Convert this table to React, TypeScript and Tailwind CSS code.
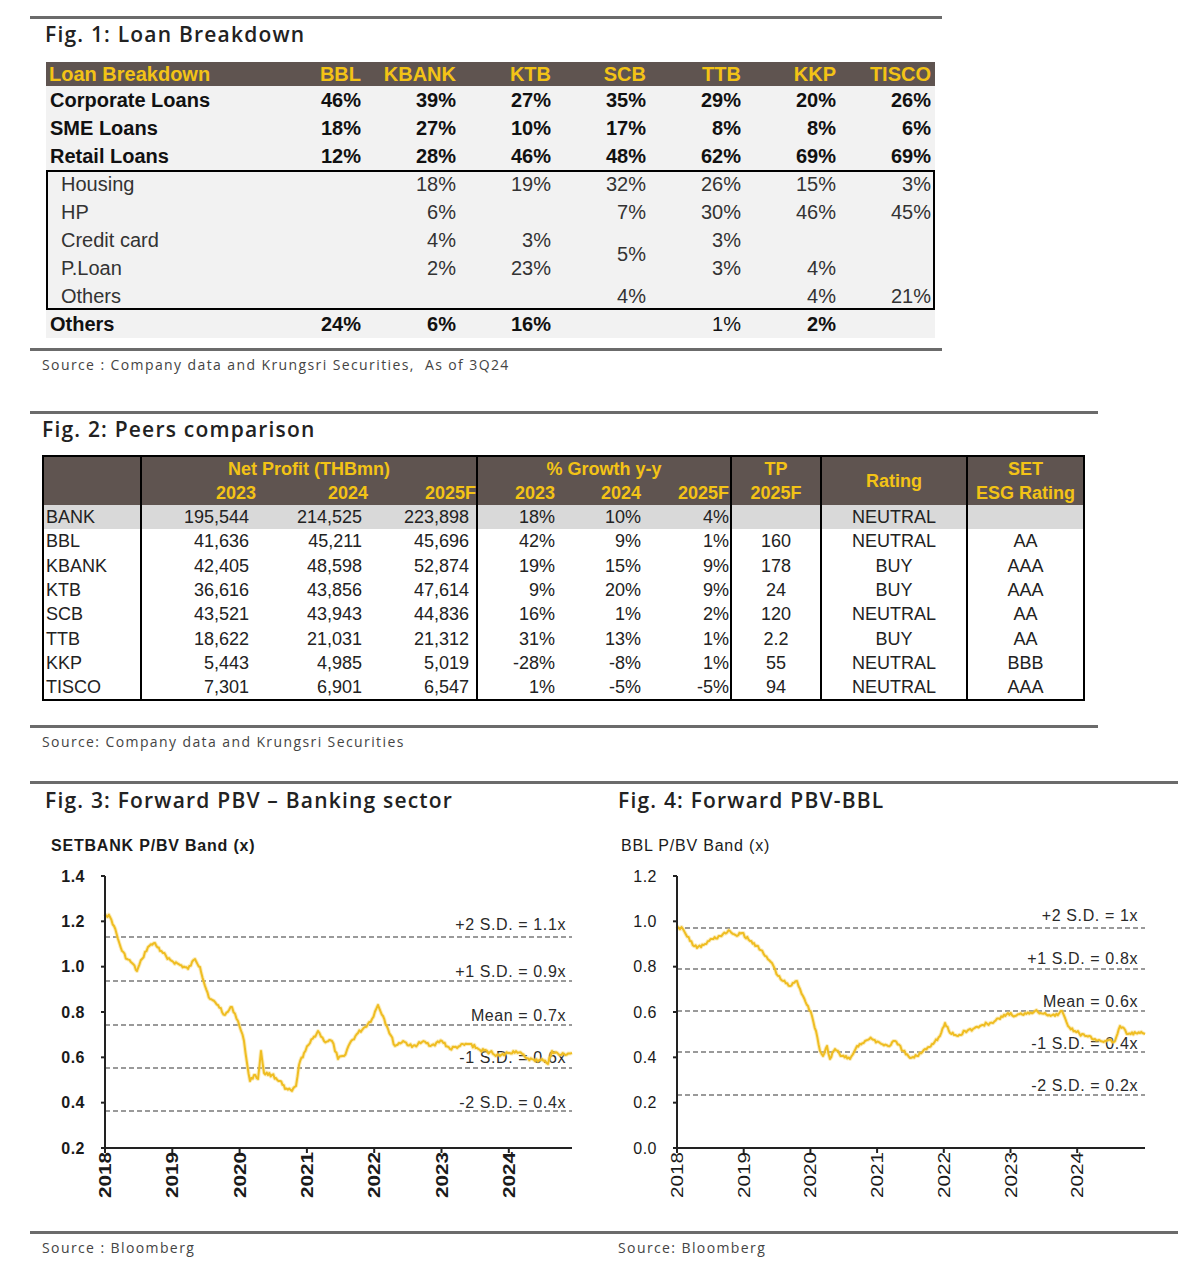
import React from "react";

const TITLE = "font-['Open_Sans',sans-serif] font-semibold text-[21px] leading-[26px] tracking-[1.2px] text-[#222]";
const SOURCE = "font-['Open_Sans',sans-serif] text-[14px] leading-[18px] tracking-[1.4px] text-[#444]";
const ARIAL = "font-['Liberation_Sans',Arial,sans-serif]";

const mainRows = [
  { label: "Corporate Loans", vals: ["46%", "39%", "27%", "35%", "29%", "20%", "26%"] },
  { label: "SME Loans", vals: ["18%", "27%", "10%", "17%", "8%", "8%", "6%"] },
  { label: "Retail Loans", vals: ["12%", "28%", "46%", "48%", "62%", "69%", "69%"] },
];

const banks = ["BBL", "KBANK", "KTB", "SCB", "TTB", "KKP", "TISCO"];

const peers = [
  ["BANK", "195,544", "214,525", "223,898", "18%", "10%", "4%", "", "NEUTRAL", ""],
  ["BBL", "41,636", "45,211", "45,696", "42%", "9%", "1%", "160", "NEUTRAL", "AA"],
  ["KBANK", "42,405", "48,598", "52,874", "19%", "15%", "9%", "178", "BUY", "AAA"],
  ["KTB", "36,616", "43,856", "47,614", "9%", "20%", "9%", "24", "BUY", "AAA"],
  ["SCB", "43,521", "43,943", "44,836", "16%", "1%", "2%", "120", "NEUTRAL", "AA"],
  ["TTB", "18,622", "21,031", "21,312", "31%", "13%", "1%", "2.2", "BUY", "AA"],
  ["KKP", "5,443", "4,985", "5,019", "-28%", "-8%", "1%", "55", "NEUTRAL", "BBB"],
  ["TISCO", "7,301", "6,901", "6,547", "1%", "-5%", "-5%", "94", "NEUTRAL", "AAA"],
];

// per column cell classes for the peers table body
const peerCell = [
  "pl-[2px] border-r-2 border-black",
  "justify-end pr-[9px]",
  "justify-end pr-[8px]",
  "justify-end pr-[7px] border-r-2 border-black",
  "justify-end pr-[7px]",
  "justify-end pr-[5px]",
  "justify-end pr-[1px] border-r-2 border-black",
  "justify-center border-r-2 border-black",
  "justify-center border-r-2 border-black",
  "justify-center",
];

function jag(pts: number[][], seed: number, amp = 1.8) {
  let s = seed;
  const rnd = () => {
    s = (s * 9301 + 49297) % 233280;
    return s / 233280;
  };
  let d = `M${pts[0][0]} ${pts[0][1]}`;
  for (let i = 1; i < pts.length; i++) {
    const [x0, y0] = pts[i - 1];
    const [x1, y1] = pts[i];
    const n = Math.max(1, Math.round((x1 - x0) / 1.4));
    for (let k = 1; k <= n; k++) {
      const t = k / n;
      const x = x0 + (x1 - x0) * t;
      const y = y0 + (y1 - y0) * t + (k === n ? 0 : (rnd() - 0.5) * amp * 2);
      d += ` L${x.toFixed(1)} ${y.toFixed(1)}`;
    }
  }
  return d;
}

const line1 = [
  [105, 913], [110, 916], [114, 925], [118, 938], [122, 950], [127, 958], [132, 962], [137, 970], [142, 958],
  [148, 946], [155, 942], [160, 950], [166, 955], [172, 960], [180, 964], [188, 968], [195, 958], [200, 966],
  [205, 985], [210, 998], [218, 1004], [225, 1014], [232, 1006], [238, 1020], [244, 1040], [247, 1062],
  [250, 1080], [254, 1074], [258, 1078], [261, 1050], [264, 1072], [272, 1074], [280, 1080], [285, 1088],
  [292, 1090], [296, 1085], [299, 1064], [304, 1052], [310, 1042], [318, 1030], [324, 1040], [332, 1040],
  [338, 1058], [344, 1055], [350, 1042], [358, 1032], [365, 1026], [372, 1018], [378, 1004], [383, 1015],
  [388, 1028], [395, 1045], [403, 1040], [412, 1046], [422, 1041], [432, 1044], [442, 1040], [450, 1048],
  [460, 1045], [470, 1043], [480, 1049], [490, 1051], [500, 1055], [508, 1052], [516, 1050], [525, 1056],
  [535, 1060], [542, 1058], [548, 1063], [552, 1050], [560, 1054], [572, 1052],
];

const line2 = [
  [677, 925], [683, 928], [690, 940], [697, 947], [705, 943], [712, 938], [720, 935], [730, 930], [737, 935],
  [742, 932], [750, 940], [758, 945], [765, 955], [772, 962], [778, 975], [783, 980], [790, 985], [797, 980],
  [803, 995], [808, 1005], [812, 1015], [816, 1030], [820, 1050], [823, 1055], [827, 1045], [830, 1058],
  [835, 1048], [842, 1055], [850, 1058], [857, 1045], [865, 1040], [872, 1038], [880, 1042], [888, 1045],
  [895, 1040], [903, 1050], [910, 1057], [917, 1055], [925, 1048], [932, 1043], [940, 1035], [945, 1022],
  [950, 1032], [958, 1035], [965, 1030], [973, 1028], [980, 1025], [990, 1022], [1000, 1018], [1008, 1012],
  [1015, 1015], [1025, 1012], [1035, 1010], [1045, 1012], [1055, 1015], [1062, 1010], [1068, 1025],
  [1075, 1030], [1085, 1035], [1095, 1038], [1105, 1040], [1115, 1040], [1120, 1025], [1128, 1033],
  [1140, 1032], [1145, 1033],
];

type ChartProps = {
  left: number;
  width: number;
  axisX: number;
  endX: number;
  ticks: string[];
  bold: boolean;
  yearStep: number;
  bands: [number, string, number][];
  labelRight: number;
  path: string;
};

function BandChart({ left, width, axisX, endX, ticks, bold, yearStep, bands, labelRight, path }: ChartProps) {
  const top = 875;
  const bot = 1147;
  const step = (bot - top) / (ticks.length - 1);
  const years = ["2018", "2019", "2020", "2021", "2022", "2023", "2024"];
  const fw = bold ? 700 : 400;
  return (
    <svg width={width} height={350} viewBox={`${left} 855 ${width} 350`} className="block">
      {bands.map(([y, label, ly]) => (
        <g key={label}>
          <line x1={axisX} x2={endX} y1={y} y2={y} stroke="#7a7a7a" strokeWidth={1.3} strokeDasharray="5 3" />
          <text x={labelRight} y={ly + 5.5} textAnchor="end" fontSize={16} letterSpacing={0.6} fill="#2a2a2a"
            fontFamily="Liberation Sans, Arial, sans-serif">
            {label}
          </text>
        </g>
      ))}
      <path d={path} fill="none" stroke="#f6d56a" strokeWidth={4} strokeOpacity={0.45} strokeLinejoin="round" />
      <path d={path} fill="none" stroke="#efbd22" strokeWidth={2} strokeLinejoin="round" />
      <line x1={axisX} x2={axisX} y1={top} y2={bot} stroke="#222" strokeWidth={2} />
      <line x1={axisX} x2={endX} y1={bot} y2={bot} stroke="#222" strokeWidth={2} />
      {ticks.map((t, i) => (
        <g key={t}>
          <line x1={axisX - 4} x2={axisX} y1={top + i * step} y2={top + i * step} stroke="#222" strokeWidth={2} />
          <text x={axisX - 20} y={top + i * step + 5.5} textAnchor="end" fontSize={16} fontWeight={fw}
            letterSpacing={0.5} fill="#1a1a1a" fontFamily="Liberation Sans, Arial, sans-serif">
            {t}
          </text>
        </g>
      ))}
      {years.map((yr, i) => {
        const x = axisX + i * yearStep;
        return (
          <g key={yr}>
            <line x1={x} x2={x} y1={bot} y2={bot + 5} stroke="#222" strokeWidth={2} />
            <text transform={`translate(${x + 6} ${bot + 4}) rotate(-90)`} textAnchor="end" fontSize={16}
              fontWeight={fw} textLength={46} lengthAdjust="spacingAndGlyphs" fill="#1a1a1a"
              fontFamily="Liberation Sans, Arial, sans-serif">
              {yr}
            </text>
          </g>
        );
      })}
    </svg>
  );
}

function LoanTable() {
  const valCls = "flex items-center justify-end pr-[4px]";
  return (
    <div className={`${ARIAL} ml-[16px] w-[889px] bg-[#f2f2f2] text-[20px] leading-[24px]`}>
      <div className="grid grid-cols-[224px_repeat(7,95px)] h-[24px] bg-[#5f5450] font-bold text-[#f3c316]">
        <div className="pl-[3px]">Loan Breakdown</div>
        {banks.map((b) => (
          <div key={b} className="text-right pr-[4px]">{b}</div>
        ))}
      </div>
      {mainRows.map((r) => (
        <div key={r.label} className="grid grid-cols-[224px_repeat(7,95px)] h-[28px] font-bold text-[#111]">
          <div className="flex items-center pl-[4px]">{r.label}</div>
          {r.vals.map((v, i) => (
            <div key={i} className={valCls}>{v}</div>
          ))}
        </div>
      ))}
      <div className="grid grid-cols-[224px_repeat(7,95px)] grid-rows-[repeat(5,28px)] shadow-[inset_0_0_0_2px_#000] text-[#333]">
        <div className="flex items-center pl-[15px]">Housing</div>
        <div />
        <div className={valCls}>18%</div>
        <div className={valCls}>19%</div>
        <div className={valCls}>32%</div>
        <div className={valCls}>26%</div>
        <div className={valCls}>15%</div>
        <div className={valCls}>3%</div>

        <div className="flex items-center pl-[15px]">HP</div>
        <div />
        <div className={valCls}>6%</div>
        <div />
        <div className={valCls}>7%</div>
        <div className={valCls}>30%</div>
        <div className={valCls}>46%</div>
        <div className={valCls}>45%</div>

        <div className="flex items-center pl-[15px]">Credit card</div>
        <div />
        <div className={valCls}>4%</div>
        <div className={valCls}>3%</div>
        <div className={`${valCls} row-span-2`}>5%</div>
        <div className={valCls}>3%</div>
        <div />
        <div />

        <div className="flex items-center pl-[15px]">P.Loan</div>
        <div />
        <div className={valCls}>2%</div>
        <div className={valCls}>23%</div>
        <div className={valCls}>3%</div>
        <div className={valCls}>4%</div>
        <div />

        <div className="flex items-center pl-[15px]">Others</div>
        <div />
        <div />
        <div />
        <div className={valCls}>4%</div>
        <div />
        <div className={valCls}>4%</div>
        <div className={valCls}>21%</div>
      </div>
      <div className="grid grid-cols-[224px_repeat(7,95px)] h-[28px] font-bold text-[#111]">
        <div className="flex items-center pl-[4px]">Others</div>
        <div className={valCls}>24%</div>
        <div className={valCls}>6%</div>
        <div className={valCls}>16%</div>
        <div />
        <div className={`${valCls} font-normal`}>1%</div>
        <div className={valCls}>2%</div>
        <div />
      </div>
    </div>
  );
}

function PeersTable() {
  const cols = "grid grid-cols-[98px_116px_112px_108px_84px_84px_86px_90px_146px_115px]";
  return (
    <div className={`${ARIAL} ml-[12px] w-[1043px] border-2 border-black text-[18px]`}>
      <div className={`${cols} grid-rows-[24px_24px] bg-[#5f5450] font-bold text-[#f3c316] leading-[24px]`}>
        <div className="row-span-2 border-r-2 border-black" />
        <div className="col-span-3 text-center border-r-2 border-black">Net Profit (THBmn)</div>
        <div className="col-span-3 text-center border-r-2 border-black">% Growth y-y</div>
        <div className="text-center border-r-2 border-black">TP</div>
        <div className="row-span-2 flex items-center justify-center border-r-2 border-black">Rating</div>
        <div className="text-center">SET</div>
        <div className="text-right pr-[2px]">2023</div>
        <div className="text-right pr-[2px]">2024</div>
        <div className="text-right border-r-2 border-black">2025F</div>
        <div className="text-right pr-[7px]">2023</div>
        <div className="text-right pr-[5px]">2024</div>
        <div className="text-right pr-[1px] border-r-2 border-black">2025F</div>
        <div className="text-center border-r-2 border-black">2025F</div>
        <div className="text-center">ESG Rating</div>
      </div>
      {peers.map((row, ri) => (
        <div key={row[0]} className={`${cols} h-[24.3px] text-[#222] ${ri === 0 ? "bg-[#d9d9d9]" : "bg-white"}`}>
          {row.map((v, ci) => (
            <div key={ci} className={`flex items-center leading-[24px] ${peerCell[ci]}`}>{v}</div>
          ))}
        </div>
      ))}
    </div>
  );
}

export default function App() {
  const chartTitle = `${ARIAL} text-[16px] leading-[20px] tracking-[0.8px] text-[#1a1a1a]`;
  return (
    <div className="w-[1200px] h-[1269px] bg-white pl-[30px] pt-[16px]">
      {/* Fig 1 */}
      <div className="w-[912px] h-[3px] bg-[#6b6b6b]" />
      <div className={`${TITLE} ml-[15px] mt-[2px]`}>Fig. 1: Loan Breakdown</div>
      <div className="mt-[15px]">
        <LoanTable />
      </div>
      <div className="w-[912px] h-[3px] bg-[#6b6b6b] mt-[10px]" />
      <div className={`${SOURCE} ml-[12px] mt-[5px]`}>Source : Company data and Krungsri Securities,&nbsp; As of 3Q24</div>

      {/* Fig 2 */}
      <div className="w-[1068px] h-[3px] bg-[#6b6b6b] mt-[37px]" />
      <div className={`${TITLE} ml-[12px] mt-[2px]`}>Fig. 2: Peers comparison</div>
      <div className="mt-[13px]">
        <PeersTable />
      </div>
      <div className="w-[1068px] h-[3px] bg-[#6b6b6b] mt-[24px]" />
      <div className={`${SOURCE} ml-[12px] mt-[5px]`}>Source: Company data and Krungsri Securities</div>

      {/* Fig 3 & 4 */}
      <div className="w-[1148px] h-[3px] bg-[#6b6b6b] mt-[30px]" />
      <div className="flex">
        <div className="w-[570px]">
          <div className={`${TITLE} pl-[15px] mt-[3px]`}>Fig. 3: Forward PBV – Banking sector</div>
          <div className={`${chartTitle} font-bold pl-[21px] mt-[23px]`}>SETBANK P/BV Band (x)</div>
          <BandChart
            left={30}
            width={570}
            axisX={105}
            endX={572}
            ticks={["1.4", "1.2", "1.0", "0.8", "0.6", "0.4", "0.2"]}
            bold
            yearStep={67.3}
            bands={[
              [936, "+2 S.D. = 1.1x", 923],
              [980, "+1 S.D. = 0.9x", 970],
              [1024, "Mean = 0.7x", 1014],
              [1067, "-1 S.D. = 0.6x", 1056],
              [1110, "-2 S.D. = 0.4x", 1101],
            ]}
            labelRight={566}
            path={jag(line1, 17)}
          />
        </div>
        <div className="w-[578px]">
          <div className={`${TITLE} pl-[18px] mt-[3px]`}>Fig. 4: Forward PBV-BBL</div>
          <div className={`${chartTitle} pl-[21px] mt-[23px]`}>BBL P/BV Band (x)</div>
          <BandChart
            left={600}
            width={578}
            axisX={677}
            endX={1145}
            ticks={["1.2", "1.0", "0.8", "0.6", "0.4", "0.2", "0.0"]}
            bold={false}
            yearStep={66.7}
            bands={[
              [927, "+2 S.D. = 1x", 914],
              [968, "+1 S.D. = 0.8x", 957],
              [1010, "Mean = 0.6x", 1000],
              [1051, "-1 S.D. = 0.4x", 1042],
              [1094, "-2 S.D. = 0.2x", 1084],
            ]}
            labelRight={1138}
            path={jag(line2, 41)}
          />
        </div>
      </div>
      <div className="w-[1148px] h-[3px] bg-[#6b6b6b] mt-[25px]" />
      <div className="flex">
        <div className={`${SOURCE} w-[570px] pl-[12px] mt-[5px]`}>Source : Bloomberg</div>
        <div className={`${SOURCE} pl-[18px] mt-[5px]`}>Source: Bloomberg</div>
      </div>
    </div>
  );
}
